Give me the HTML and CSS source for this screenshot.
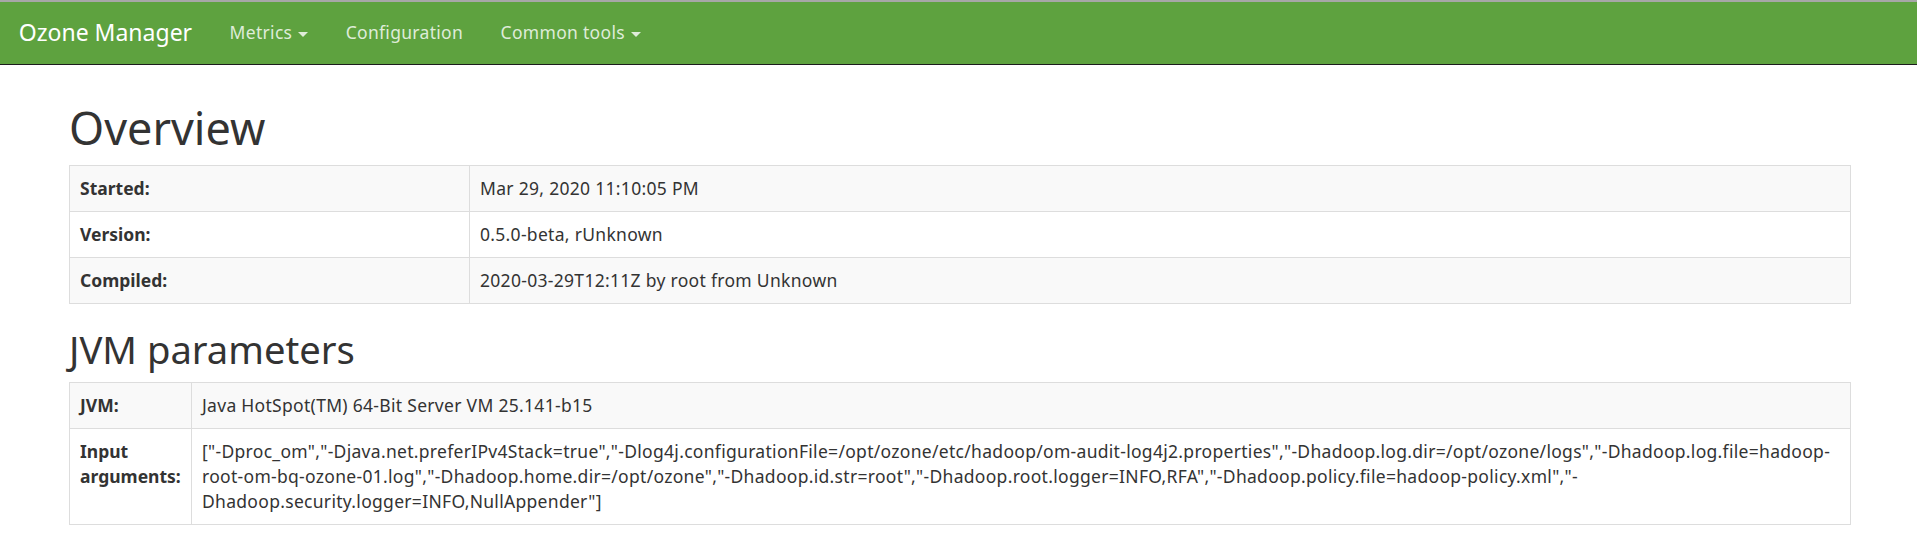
FILE: index.html
```html
<!DOCTYPE html>
<html>
<head>
<meta charset="utf-8">
<title>Ozone Manager</title>
<link rel="stylesheet" href="styles.css">
</head>
<body>
<nav class="navbar">
  <div class="navbar-inner">
    <a class="brand" href="#">Ozone Manager</a>
    <ul class="nav">
      <li><a href="#">Metrics <span class="caret"></span></a></li>
      <li><a href="#">Configuration</a></li>
      <li><a href="#">Common tools <span class="caret"></span></a></li>
    </ul>
  </div>
</nav>
<main class="content">
  <h1 class="page-title">Overview</h1>
  <table class="info-table overview-table">
    <tbody>
      <tr><th>Started:</th><td>Mar 29, 2020 11:10:05 PM</td></tr>
      <tr><th>Version:</th><td>0.5.0-beta, rUnknown</td></tr>
      <tr><th>Compiled:</th><td>2020-03-29T12:11Z by root from Unknown</td></tr>
    </tbody>
  </table>
  <h2 class="section-title">JVM parameters</h2>
  <table class="info-table jvm-table">
    <tbody>
      <tr><th>JVM:</th><td>Java HotSpot(TM) 64-Bit Server VM 25.141-b15</td></tr>
      <tr><th>Input arguments:</th><td>["-Dproc_om","-Djava.net.preferIPv4Stack=true","-Dlog4j.configurationFile=/opt/ozone/etc/hadoop/om-audit-log4j2.properties","-Dhadoop.log.dir=/opt/ozone/logs","-Dhadoop.log.file=hadoop-root-om-bq-ozone-01.log","-Dhadoop.home.dir=/opt/ozone","-Dhadoop.id.str=root","-Dhadoop.root.logger=INFO,RFA","-Dhadoop.policy.file=hadoop-policy.xml","-Dhadoop.security.logger=INFO,NullAppender"]</td></tr>
    </tbody>
  </table>
</main>
</body>
</html>
```
FILE: styles.css
```css
html, body {
  margin: 0;
  padding: 0;
}
body {
  font-family: "Noto Sans", "Open Sans", sans-serif;
  font-size: 17.5px;
  line-height: 25px;
  color: #333;
  background: #fff;
}
.navbar {
  border-top: 2px solid #a7a7a7;
  border-bottom: 1px solid #1c1c1c;
  background: #5ea23f;
}
.navbar-inner {
  display: flex;
  align-items: stretch;
  height: 62px;
}
.brand {
  display: block;
  padding: 18px 18.75px 19px 18.75px;
  font-size: 23px;
  line-height: 25px;
  color: #fff;
  text-decoration: none;
}
.nav {
  display: flex;
  margin: 0;
  padding: 0;
  list-style: none;
}
.nav a {
  display: block;
  padding: 18px 18.75px 19px;
  color: #dfecd9;
  text-decoration: none;
  font-size: 17.5px;
  line-height: 25px;
  letter-spacing: 0.3px;
}
.caret {
  display: inline-block;
  width: 0;
  height: 0;
  margin-left: 1px;
  vertical-align: middle;
  border-top: 5px solid;
  border-left: 5px solid transparent;
  border-right: 5px solid transparent;
}
.content {
  padding: 37.5px 66px 20px 69px;
}
.page-title {
  margin: 0 0 12.5px;
  font-size: 45px;
  line-height: 49.5px;
  font-weight: 400;
}
.section-title {
  margin: 0 0 12.5px;
  font-size: 38.2px;
  line-height: 41.25px;
  font-weight: 400;
}
.info-table {
  width: 100%;
  border-collapse: collapse;
  border-spacing: 0;
  margin-bottom: 25px;
  border: 1px solid #ddd;
  letter-spacing: 0.3px;
}
.info-table th,
.info-table td {
  padding: 10px;
  border: 1px solid #ddd;
  text-align: left;
  vertical-align: top;
  line-height: 25px;
}
.info-table th {
  font-weight: 700;
  letter-spacing: 0;
}
.info-table tr:nth-child(odd) {
  background: #f9f9f9;
}
.overview-table th {
  width: 379px;
}
.jvm-table th {
  width: 101px;
}
```
